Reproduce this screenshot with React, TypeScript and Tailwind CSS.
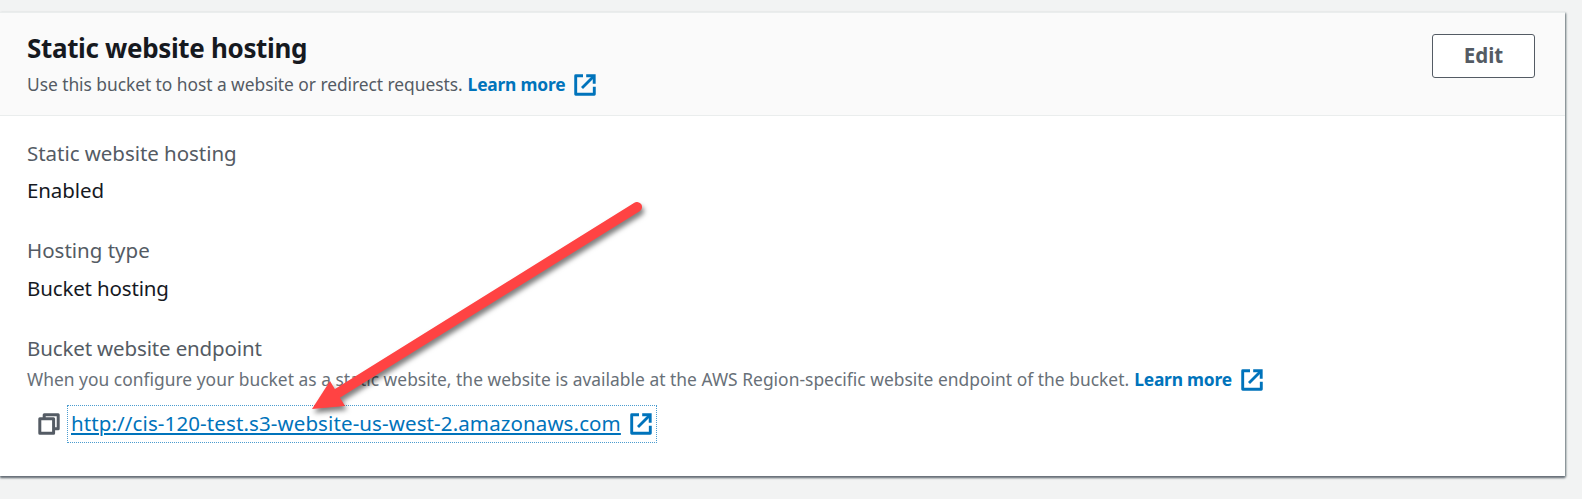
import type { ReactNode } from "react";

function ExternalIcon() {
  return (
    <svg className="h-[22px] w-[22px] shrink-0" viewBox="0 0 22 22" fill="none" stroke="#0073bb" strokeWidth="2.9">
      <path d="M9 1.8H1.7V20.2H20.3V12.8" strokeLinejoin="round" />
      <path d="M12.2 1.8H20.2V9.8" />
      <path d="M20 2L8 14" />
    </svg>
  );
}

function CopyIcon() {
  return (
    <svg className="h-[22px] w-[22px] shrink-0" viewBox="0 0 22 22" fill="none" stroke="#545b64" strokeWidth="3" strokeLinejoin="round">
      <path d="M1.8 5.8H15.6V20.2H1.8Z" />
      <path d="M6.2 5.8V1.8H20.2V15.8H15.6" />
    </svg>
  );
}

function LearnMore({ children }: { children: ReactNode }) {
  return (
    <a className="ml-[5px] flex items-center gap-[9px] font-bold text-[#0073bb]">
      <span className="pb-[2px] tracking-[-0.2px]">{children}</span>
      <ExternalIcon />
    </a>
  );
}

function Arrow() {
  return (
    <svg className="pointer-events-none absolute left-[300px] top-[190px] h-[240px] w-[360px]" viewBox="300 190 360 240">
      <g className="drop-shadow-[2px_4px_2.5px_rgba(0,0,0,0.5)]" fill="#ff4343">
        <path d="M637 207L338 393" stroke="#ff4343" strokeWidth="10" strokeLinecap="round" />
        <path d="M312 409L330 381L345 406Z" />
      </g>
    </svg>
  );
}

export default function App() {
  return (
    <div className="relative h-[499px] w-[1582px] overflow-hidden bg-[#f2f3f3] pt-[12px] font-['Noto_Sans',sans-serif] whitespace-nowrap">
      <section className="h-[464px] w-[1565px] border-t border-[#eaeded] bg-white shadow-[0_2px_2px_0_#687078,1px_1px_2px_0_rgba(0,28,36,0.5)]">
        <header className="flex h-[103px] justify-between border-b border-[#eaeded] bg-[#fafafa] pl-[27px] pr-[30px]">
          <div className="pt-[15px]">
            <h2 className="h-[41px] text-[26px] leading-[40px] font-bold tracking-[-0.34px] text-[#16191f]">
              <span>Static website hosting</span>
            </h2>
            <div className="flex h-[32px] items-center text-[17.4px] leading-[32px] text-[#545b64]">
              <span className="pb-[2px] tracking-[-0.05px]">Use this bucket to host a website or redirect requests.</span>
              <LearnMore>Learn more</LearnMore>
            </div>
          </div>
          <button className="mt-[21px] h-[44px] w-[103px] rounded-[3px] border border-[#545b64] bg-white pb-[2px] text-[20.5px] font-bold text-[#545b64]">
            Edit
          </button>
        </header>
        <div className="pl-[27px] pt-[18px] text-[20.5px] leading-[38px] tracking-[-0.1px] text-[#16191f]">
          <div className="tracking-[-0.04px] text-[#545b64]">Static website hosting</div>
          <div className="-mt-px">Enabled</div>
          <div className="mt-[22px] tracking-[0px] text-[#545b64]">Hosting type</div>
          <div className="tracking-[-0.15px]">Bucket hosting</div>
          <div className="mt-[22px] tracking-[-0.14px] text-[#545b64]">Bucket website endpoint</div>
          <div className="-mt-[3px] flex h-[32px] items-center text-[17.4px] leading-[32px] text-[#687078]">
            <span className="pb-[2px] tracking-[0.02px]">When you configure your bucket as a static website, the website is available at the AWS Region-specific website endpoint of the bucket.</span>
            <LearnMore>Learn more</LearnMore>
          </div>
          <div className="mt-[9px] flex items-center pl-[11px]">
            <CopyIcon />
            <a className="ml-[7px] flex h-[38px] w-[590px] items-center justify-between border border-dotted border-[#0073bb]/70 pl-[3px] pr-[4px] text-[#0073bb]">
              <span className="pb-[2px] tracking-[0.11px] underline decoration-2 underline-offset-[2px]">http://cis-120-test.s3-website-us-west-2.amazonaws.com</span>
              <ExternalIcon />
            </a>
          </div>
        </div>
      </section>
      <Arrow />
    </div>
  );
}
